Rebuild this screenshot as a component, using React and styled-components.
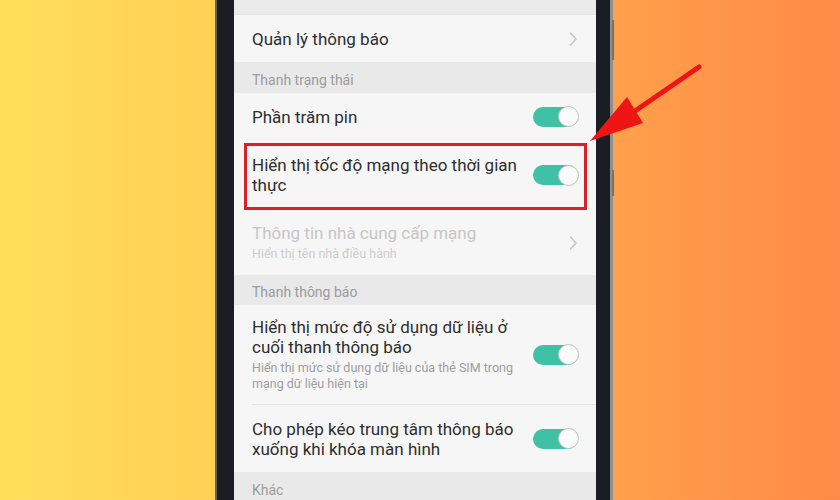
import styled, { createGlobalStyle } from "styled-components";

const GlobalStyle = createGlobalStyle`
  body {
    margin: 0;
    font-family: Roboto, "Noto Sans", sans-serif;
  }
`;

const Stage = styled.div`
  position: relative;
  width: 840px;
  height: 500px;
  overflow: hidden;
  display: flex;
  padding-left: 215px;
  box-sizing: border-box;
  background: linear-gradient(90deg, #ffe05b 0%, #ffcd55 30%, #ffa94d 62%, #ff8a47 100%);
`;

const Phone = styled.div`
  position: relative;
  width: 398px;
  height: 100%;
  box-sizing: border-box;
  background: #1a1e23;
  border-left: 2px solid #5f6266;
  border-right: 3px solid #8d8f91;
  padding: 0 14px 0 17px;
  display: flex;
`;

const SideKey = styled.span`
  position: absolute;
  right: -4px;
  top: ${(p) => p.$top}px;
  width: 2px;
  height: ${(p) => p.$h}px;
  background: #6f7276;
`;

const Screen = styled.div`
  flex: 1;
  display: flex;
  flex-direction: column;
  background: #f6f6f6;
  overflow: hidden;
`;

const TopStrip = styled.div`
  height: 14px;
  flex-shrink: 0;
  background: #ebebeb;
  border-bottom: 1px solid #e2e2e2;
`;

const Section = styled.div`
  height: ${(p) => p.$h || 31}px;
  flex-shrink: 0;
  box-sizing: border-box;
  background: #e9e9e9;
  display: flex;
  align-items: ${(p) => (p.$top ? "flex-start" : "flex-end")};
  padding: ${(p) => (p.$top ? "9px 18px 0" : "0 18px 4px")};
  font-size: 14px;
  line-height: 18px;
  color: #9c9c9c;
`;

const Row = styled.div`
  position: relative;
  height: ${(p) => p.$h}px;
  flex-shrink: 0;
  box-sizing: border-box;
  display: flex;
  align-items: center;
  justify-content: space-between;
  padding: 0 18px;
  background: #f6f6f6;
`;

const Divider = styled.div`
  height: 1px;
  margin-left: 18px;
  background: #e3e3e3;
  flex-shrink: 0;
`;

const TextCol = styled.div`
  display: flex;
  flex-direction: column;
  gap: 3px;
`;

const Title = styled.div`
  font-size: 17px;
  line-height: 20px;
  color: ${(p) => (p.$disabled ? "#c6c6c6" : "#2e2e2e")};
`;

const Sub = styled.div`
  font-size: 12.5px;
  line-height: 16px;
  color: ${(p) => (p.$disabled ? "#cdcdcd" : "#9d9d9d")};
`;

const Track = styled.div`
  width: 45px;
  height: 20px;
  border-radius: 10px;
  background: #3ec1a4;
  display: flex;
  justify-content: flex-end;
  align-items: center;
  flex-shrink: 0;
`;

const Knob = styled.span`
  width: 21px;
  height: 21px;
  border-radius: 50%;
  box-sizing: border-box;
  background: #fbfbfb;
  border: 1px solid #b9c4c0;
  margin-right: -1px;
`;

const Highlight = styled.div`
  position: absolute;
  left: 10px;
  right: 9px;
  top: 3px;
  bottom: 0;
  border: 3px solid #d6232a;
  pointer-events: none;
`;

const Arrow = styled.svg`
  position: absolute;
  left: 580px;
  top: 55px;
`;

function Toggle() {
  return (
    <Track>
      <Knob />
    </Track>
  );
}

function Chevron() {
  return (
    <svg width="10" height="16" viewBox="0 0 10 16">
      <path d="M2 1.5 L8 8 L2 14.5" fill="none" stroke="#c3c3c3" strokeWidth="1.4" />
    </svg>
  );
}

function Lines({ lines, as: Comp, disabled }) {
  return (
    <Comp $disabled={disabled}>
      {lines.map((l, i) => (
        <span key={i}>
          {l}
          {i < lines.length - 1 && <br />}
        </span>
      ))}
    </Comp>
  );
}

export default function App() {
  return (
    <Stage>
      <GlobalStyle />
      <Phone>
        <SideKey $top={20} $h={40} />
        <SideKey $top={170} $h={26} />
        <Screen>
          <TopStrip />
          <Row $h={47}>
            <Title>Quản lý thông báo</Title>
            <Chevron />
          </Row>
          <Section>Thanh trạng thái</Section>
          <Row $h={47}>
            <Title>Phần trăm pin</Title>
            <Toggle />
          </Row>
          <Row $h={70}>
            <Lines as={Title} lines={["Hiển thị tốc độ mạng theo thời gian", "thực"]} />
            <Toggle />
            <Highlight />
          </Row>
          <Row $h={65}>
            <TextCol>
              <Title $disabled>Thông tin nhà cung cấp mạng</Title>
              <Sub $disabled>Hiển thị tên nhà điều hành</Sub>
            </TextCol>
            <Chevron />
          </Row>
          <Section $h={30}>Thanh thông báo</Section>
          <Row $h={99}>
            <TextCol>
              <Lines as={Title} lines={["Hiển thị mức độ sử dụng dữ liệu ở", "cuối thanh thông báo"]} />
              <Lines as={Sub} lines={["Hiển thị mức sử dụng dữ liệu của thẻ SIM trong", "mạng dữ liệu hiện tại"]} />
            </TextCol>
            <Toggle />
          </Row>
          <Divider />
          <Row $h={67}>
            <Lines as={Title} lines={["Cho phép kéo trung tâm thông báo", "xuống khi khóa màn hình"]} />
            <Toggle />
          </Row>
          <Section $h={40} $top>Khác</Section>
        </Screen>
      </Phone>
      <Arrow width="130" height="100" viewBox="0 0 130 100">
        <line x1="55" y1="56" x2="119" y2="12" stroke="#ee1515" strokeWidth="5" strokeLinecap="round" />
        <polygon points="10,86 47,42 63,68" fill="#ee1515" />
      </Arrow>
    </Stage>
  );
}
